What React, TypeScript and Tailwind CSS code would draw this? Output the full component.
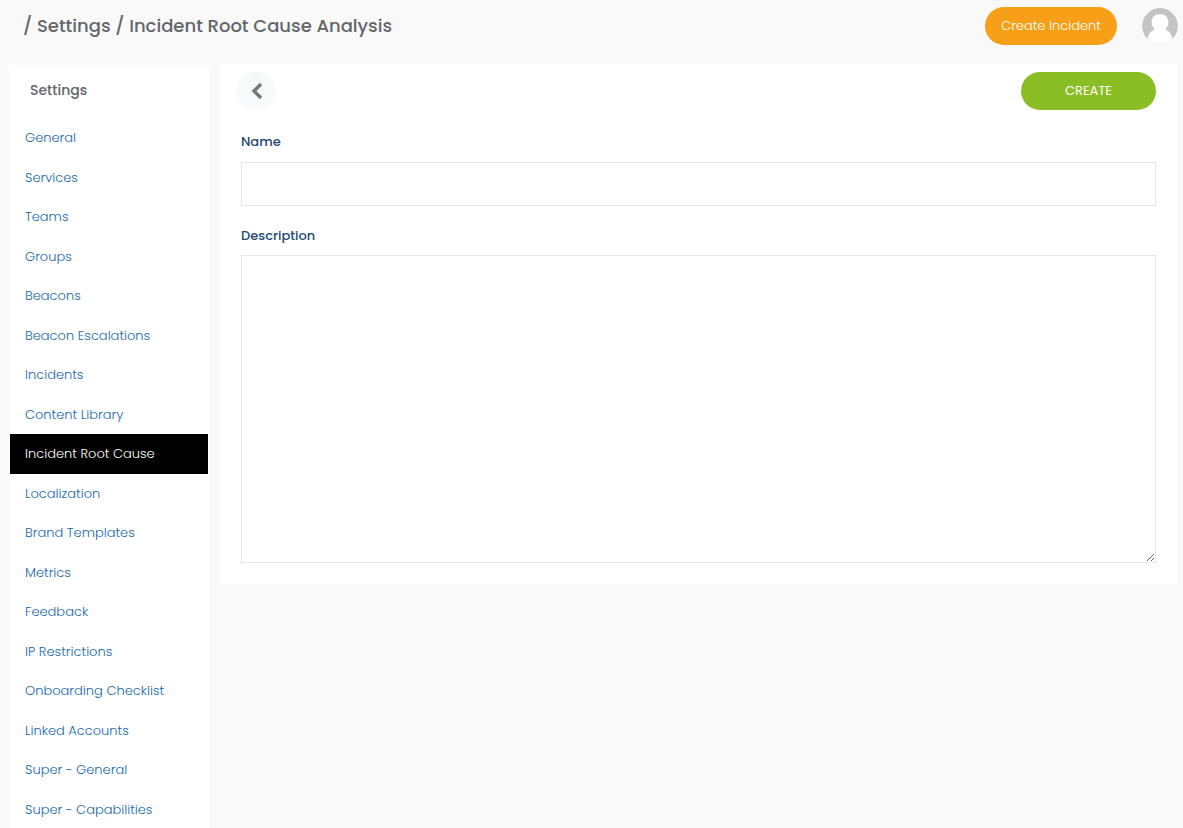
import React from 'react'

const links = [
    'General',
    'Services',
    'Teams',
    'Groups',
    'Beacons',
    'Beacon Escalations',
    'Incidents',
    'Content Library',
    'Incident Root Cause',
    'Localization',
    'Brand Templates',
    'Metrics',
    'Feedback',
    'IP Restrictions',
    'Onboarding Checklist',
    'Linked Accounts',
    'Super - General',
    'Super - Capabilities',
]

const Avatar = () => (
    <svg viewBox="0 0 36 36" className="size-9 rounded-full" role="img" aria-label="Profile">
        <circle cx="18" cy="18" r="18" fill="#c4c4c4" />
        <path d="M18 6c5 0 8.300 3.400 8.300 8 0 3.400-1.400 6-3.300 7.600C27 22.600 29.600 26 30.500 31A18 18 0 0 1 5.500 31C6.400 26 9 22.600 13 21.600 11.100 20 9.700 17.400 9.700 14c0-4.600 3.300-8 8.300-8z" fill="#fff" />
    </svg>
)

const Header = () => (
    <header className="flex h-[54px] items-center justify-between border-b border-white pb-0.5 pl-[23px] pr-[5px]">
        <h1 className="text-lg font-medium text-[#63666a]">
            / Settings / Incident Root Cause Analysis
        </h1>
        <div className="flex items-center gap-[25px]">
            <button className="h-[38px] w-[132px] rounded-full bg-[#f79f17] text-[13px] font-light text-white">
                Create Incident
            </button>
            <Avatar />
        </div>
    </header>
)

const Sidebar = () => (
    <aside className="mt-px w-[200px] shrink-0 bg-white px-px">
        <h2 className="flex h-[53px] items-center px-5 pb-[3px] text-sm font-medium text-[#63666a]">Settings</h2>
        <ul>
            {links.map((item) => (
                <li key={item}>
                    <a
                        href="#"
                        className={`block px-[15px] py-2.5 text-[13px] leading-normal font-light ${
                            item === 'Incident Root Cause' ? 'bg-black text-white' : 'text-[#1768ad]'
                        }`}
                    >
                        {item}
                    </a>
                </li>
            ))}
        </ul>
    </aside>
)

const RootCauseForm = () => (
    <form className="flex-1 self-start bg-white px-[21px] pt-2 pb-[21px]">
        <div className="-ml-[5px] flex items-center justify-between">
            <button type="button" aria-label="Back" className="flex h-[38px] w-10 items-center justify-center rounded-[50%] bg-[#f8f9fb]">
                <svg viewBox="0 0 10 16" className="ml-0.5 h-4 w-2.5" fill="none" stroke="#777" strokeWidth="3.500">
                    <path d="M9 1L2 8l7 7" />
                </svg>
            </button>
            <button type="button" className="h-[38px] w-[135px] rounded-full bg-[#8bbd24] text-[13px] text-white">
                CREATE
            </button>
        </div>
        <label htmlFor="name" className="mt-[22px] block text-[13px] font-medium leading-5 text-[#234a70]">
            Name
        </label>
        <input id="name" type="text" className="mt-2.5 block h-11 w-full border border-[#e5e5e5] px-3 text-sm outline-none" />
        <label htmlFor="description" className="mt-5 block text-[13px] font-medium leading-5 text-[#234a70]">
            Description
        </label>
        <textarea id="description" className="mt-[9px] block h-[308px] w-full resize-y border border-[#e5e5e5] p-3 text-sm outline-none" />
    </form>
)

const App = () => {
    return (
        <div className="min-h-screen bg-[#f9f9f9] font-['Poppins','Inter',sans-serif]">
            <Header />
            <main className="flex items-start gap-[11px] pt-2.5 pr-1.5 pl-[9px]">
                <Sidebar />
                <RootCauseForm />
            </main>
        </div>
    )
}

export default App
